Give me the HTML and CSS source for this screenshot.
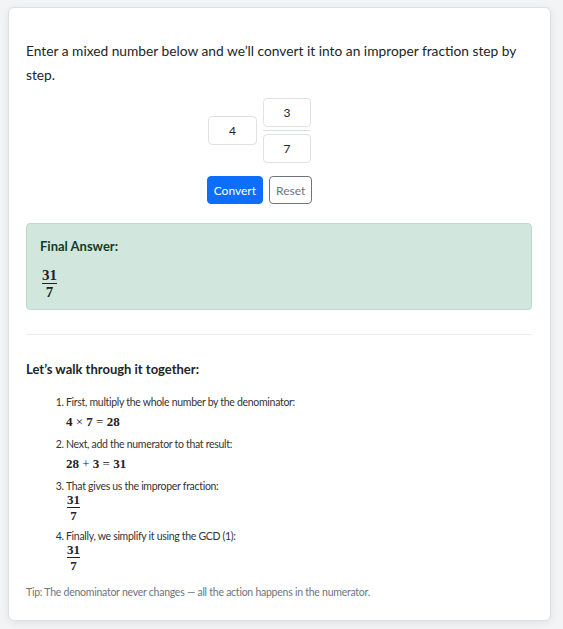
FILE: index.html
```html
<!DOCTYPE html>
<html lang="en">
<head>
    <meta charset="UTF-8">
    <meta name="viewport" content="width=device-width, initial-scale=1.0">
    <title>Mixed Number to Improper Fraction</title>
    <link rel="stylesheet" href="styles.css">
</head>
<body>
    <div class="card">
        <p class="intro">Enter a mixed number below and we’ll convert it into an improper fraction step by step.</p>

        <div class="mixed-input">
            <input class="num-box" type="text" value="4">
            <div class="frac-input">
                <input class="num-box" type="text" value="3">
                <div class="frac-bar"></div>
                <input class="num-box" type="text" value="7">
            </div>
        </div>

        <div class="actions">
            <button class="btn btn-primary">Convert</button>
            <button class="btn btn-outline">Reset</button>
        </div>

        <div class="answer">
            <div class="answer-title">Final Answer:</div>
            <div class="frac big"><span class="top">31</span><span class="bottom">7</span></div>
        </div>

        <hr class="divider">

        <h3 class="walk-title">Let’s walk through it together:</h3>
        <ol class="steps">
            <li>
                First, multiply the whole number by the denominator:
                <div class="math">4 <span class="op">×</span> 7 <span class="op">=</span> 28</div>
            </li>
            <li>
                Next, add the numerator to that result:
                <div class="math">28 <span class="op">+</span> 3 <span class="op">=</span> 31</div>
            </li>
            <li>
                That gives us the improper fraction:
                <div class="frac"><span class="top">31</span><span class="bottom">7</span></div>
            </li>
            <li>
                Finally, we simplify it using the GCD (1):
                <div class="frac"><span class="top">31</span><span class="bottom">7</span></div>
            </li>
        </ol>

        <p class="tip">Tip: The denominator never changes — all the action happens in the numerator.</p>
    </div>
</body>
</html>
```
FILE: styles.css
```css
body {
    margin: 0;
    padding: 7px 12px 8px 8px;
    background: #f3f4f5;
    font-family: "Segoe UI", Lato, sans-serif;
    color: #212529;
}
.card {
    background: white;
    border: 1px solid #dcdfe3;
    border-radius: 6px;
    box-shadow: 0 2px 8px rgba(0,0,0,0.08);
    padding: 31px 18px 19px 17px;
}
.intro {
    margin: 0;
    font-size: 13.75px;
    line-height: 24px;
}
.mixed-input {
    display: flex;
    align-items: center;
    justify-content: center;
    gap: 6px;
    margin-top: 11px;
    padding-right: 39px;
}
.frac-input {
    display: flex;
    flex-direction: column;
    align-items: center;
}
.frac-bar {
    width: 48px;
    height: 1px;
    background: #dee2e6;
    margin: 3px 0;
}
.num-box {
    width: 49px;
    height: 29px;
    box-sizing: border-box;
    border: 1px solid #dee2e6;
    border-radius: 4px;
    text-align: center;
    font-family: inherit;
    font-size: 12px;
    color: #212529;
    padding: 0;
}
.frac-input .num-box { width: 48px; }
.actions {
    display: flex;
    justify-content: center;
    gap: 6px;
    margin-top: 13px;
    padding-right: 39px;
}
.btn {
    height: 28px;
    border-radius: 4px;
    font-family: inherit;
    font-size: 12px;
    padding: 0 6px;
    cursor: pointer;
}
.btn-primary {
    background: #0d6efd;
    border: 1px solid #0d6efd;
    color: white;
}
.btn-outline {
    background: white;
    border: 1px solid #6c757d;
    color: #6c757d;
}
.answer {
    margin-top: 19px;
    background: #d1e7dd;
    border: 1px solid #badbcc;
    border-radius: 4px;
    padding: 13px 13px 9px;
    color: #0f3d28;
}
.answer-title {
    font-size: 13px;
    font-weight: bold;
    line-height: 18px;
    margin-bottom: 12px;
}
.frac {
    display: flex;
    flex-direction: column;
    align-items: center;
    width: max-content;
    font-family: "Liberation Serif", serif;
    font-weight: bold;
    font-size: 13px;
    color: #222;
    padding: 0 1px;
    letter-spacing: 0;
}
.frac .top {
    line-height: 12px;
    padding-bottom: 1px;
    border-bottom: 1px solid #222;
    align-self: stretch;
    text-align: center;
}
.frac .bottom {
    line-height: 14px;
    padding-top: 1px;
}
.frac.big { font-size: 15px; margin-left: 1px; }
.frac.big .top { line-height: 16px; padding-bottom: 0; }
.frac.big .bottom { line-height: 16px; padding-top: 0; }
.divider {
    border: none;
    border-top: 1px solid #eceef0;
    margin: 24px 0 0;
}
.walk-title {
    margin: 24px 0 0;
    font-size: 13px;
    font-weight: bold;
    line-height: 20px;
}
.steps {
    margin: 15px 0 10px;
    padding-left: 40px;
    font-size: 10.5px;
    letter-spacing: -0.3px;
    line-height: 16px;
    color: #333;
}
.steps li { margin-bottom: 4px; }
.steps li:nth-child(3) { margin-bottom: 5px; }
.math {
    font-family: "Liberation Serif", serif;
    font-weight: bold;
    font-size: 13px;
    letter-spacing: 0;
    line-height: 20px;
    margin-top: 2px;
    color: #222;
}
.math .op { font-weight: normal; }
.tip {
    margin: 0;
    font-size: 10.5px;
    letter-spacing: -0.25px;
    line-height: 18px;
    color: #6c757d;
}
```
